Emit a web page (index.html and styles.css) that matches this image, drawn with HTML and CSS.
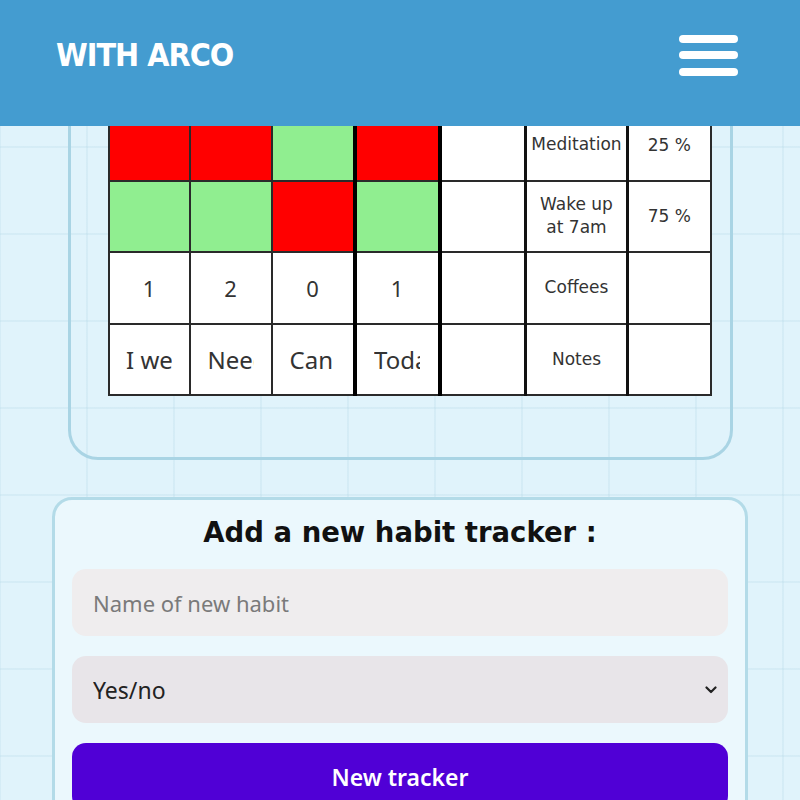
FILE: index.html
```html
<!DOCTYPE html>
<html lang="en">
<head>
<meta charset="utf-8">
<title>With Arco</title>
<link rel="stylesheet" href="styles.css">
</head>
<body>
<header class="topbar">
  <div class="logo">WITH ARCO</div>
  <button class="burger" aria-label="Menu">
    <span class="bar"></span><span class="bar"></span><span class="bar"></span>
  </button>
</header>

<main class="page">
  <section class="tracker-card">
    <table class="tracker">
      <colgroup>
        <col class="c-d1"><col class="c-d2"><col class="c-d3"><col class="c-d4">
        <col class="c-empty"><col class="c-name"><col class="c-score">
      </colgroup>
      <tbody>
        <tr>
          <td class="no"></td><td class="no"></td><td class="yes"></td><td class="no sep"></td>
          <td class="sep"></td><td class="name mid">Meditation</td><td class="score mid">25 %</td>
        </tr>
        <tr>
          <td class="yes"></td><td class="yes"></td><td class="no"></td><td class="yes sep"></td>
          <td class="sep"></td><td class="name mid">Wake up at 7am</td><td class="score mid">75 %</td>
        </tr>
        <tr>
          <td class="num">1</td><td class="num">2</td><td class="num">0</td><td class="num sep">1</td>
          <td class="sep"></td><td class="name mid">Coffees</td><td class="score mid"></td>
        </tr>
        <tr>
          <td class="note"><div class="clip">I went</div></td>
          <td class="note"><div class="clip">Need</div></td>
          <td class="note"><div class="clip">Can</div></td>
          <td class="note sep"><div class="clip">Today</div></td>
          <td class="sep"></td><td class="name mid">Notes</td><td class="score mid"></td>
        </tr>
      </tbody>
    </table>
  </section>

  <section class="new-card">
    <h2 class="new-title">Add a new habit tracker :</h2>
    <input class="field" type="text" placeholder="Name of new habit">
    <div class="select-wrap">
      <select class="field select">
        <option>Yes/no</option>
        <option>Number</option>
        <option>Text</option>
      </select>
      <svg class="chev" width="12" height="8" viewBox="0 0 12 8"><path d="M1.5 1.5 L6 6 L10.5 1.5" fill="none" stroke="#222" stroke-width="2.2" stroke-linecap="round" stroke-linejoin="round"/></svg>
    </div>
    <button class="submit">New tracker</button>
  </section>
</main>
</body>
</html>
```

FILE: styles.css
```css
html {
  background-color: #e0f3fb;
  background-image:
    linear-gradient(to right, rgba(178, 215, 230, 0.25) 2px, transparent 2px),
    linear-gradient(to bottom, rgba(178, 215, 230, 0.25) 2px, transparent 2px);
  background-size: 87px 87px;
  background-position: 86px 59px;
}

body {
  margin: 0;
  font-family: "Noto Sans", "DejaVu Sans", sans-serif;
}

.topbar {
  position: fixed;
  top: 0;
  left: 0;
  right: 0;
  height: 126px;
  background: #449cd0;
  display: flex;
  align-items: center;
  justify-content: space-between;
  padding: 0 62px 16px 56px;
  box-sizing: border-box;
  z-index: 10;
}

.logo {
  color: #fff;
  font-family: "DejaVu Sans Condensed", "DejaVu Sans", sans-serif;
  font-stretch: condensed;
  font-weight: bold;
  font-size: 32px;
  letter-spacing: -1px;
}

.burger {
  background: none;
  border: 0;
  padding: 0;
  display: flex;
  flex-direction: column;
  gap: 8.5px;
  width: 59px;
}

.bar {
  display: block;
  height: 8px;
  border-radius: 4px;
  background: #fff;
}

.page {
  padding-top: 60px;
  display: flex;
  flex-direction: column;
  align-items: center;
}

.tracker-card {
  width: 665px;
  box-sizing: border-box;
  border: 3px solid #a9d4e4;
  border-radius: 30px;
  padding: 45px 20px 61px 37px;
}

.tracker {
  border-collapse: collapse;
  table-layout: fixed;
  width: 602px;
  background: #fff;
  font-family: "DejaVu Sans", sans-serif;
  color: #333;
}

.c-d1 { width: 81px; }
.c-d2 { width: 82px; }
.c-d3 { width: 83px; }
.c-d4 { width: 85px; }
.c-empty { width: 86px; }
.c-name { width: 102px; }
.c-score { width: 83px; }

.tracker td {
  height: 69.5px;
  border: 2px solid #2a2a2a;
  padding: 0;
  text-align: center;
  vertical-align: middle;
}

.tracker td.sep {
  border-left: 4px solid #000;
}

.tracker td.mid {
  border-left: 3px solid #111;
}

.tracker td.no { background: #ff0000; }
.tracker td.yes { background: #90ee90; }

.tracker td.name {
  font-size: 17px;
  line-height: 23px;
  padding: 0 4px;
}

.score {
  font-size: 17px;
}

.num {
  font-size: 22px;
  font-family: "Noto Sans", sans-serif;
}

.clip {
  width: 46px;
  margin: 0 auto;
  overflow: hidden;
  white-space: nowrap;
  text-align: left;
  font-size: 24px;
  font-family: "Noto Sans", sans-serif;
}

.new-card {
  margin-top: 37px;
  width: 696px;
  box-sizing: border-box;
  border: 3px solid #b3dbe8;
  border-radius: 20px;
  background: #ebf8fd;
  padding: 16px 17px 20px;
  display: flex;
  flex-direction: column;
  gap: 20px;
}

.new-title {
  margin: 0 0 1px;
  text-align: center;
  font-family: "DejaVu Sans", sans-serif;
  font-size: 27.5px;
  line-height: 32px;
  font-weight: bold;
  color: #111;
}

.field {
  height: 67px;
  border: 0;
  border-radius: 14px;
  background: #efedee;
  padding: 0 21px;
  font-family: "Noto Sans", sans-serif;
  font-size: 22px;
  color: #222;
  box-sizing: border-box;
  width: 100%;
  outline: none;
}

.field::placeholder {
  color: #7a7a7a;
}

.select-wrap {
  position: relative;
}

.select {
  appearance: none;
  -webkit-appearance: none;
  background: #e8e5e9;
  display: block;
  font-size: 23px;
}

.chev {
  position: absolute;
  right: 11px;
  top: 30px;
}

.submit {
  height: 67px;
  border: 0;
  border-radius: 14px;
  background: #5000d6;
  color: #fff;
  font-family: "Noto Sans", sans-serif;
  font-weight: 600;
  font-size: 23px;
}
```
